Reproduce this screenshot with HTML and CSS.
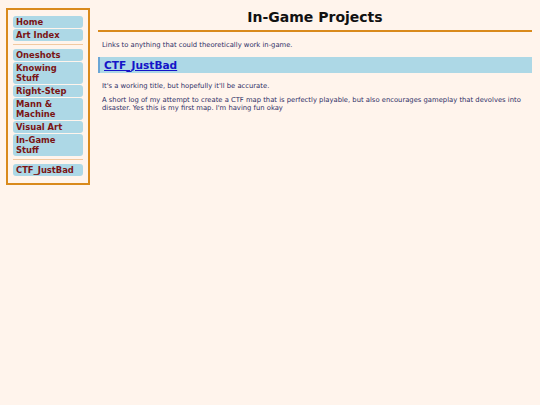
FILE: index.html
```html
<!DOCTYPE html>
<html>
<head>
<meta charset="utf-8">
<title>In-Game Projects</title>
<link rel="stylesheet" href="styles.css">
</head>
<body>
<div class="page">
  <nav class="sidebar">
    <a class="nav-item" href="#">Home</a>
    <a class="nav-item" href="#">Art Index</a>
    <hr class="nav-sep">
    <a class="nav-item" href="#">Oneshots</a>
    <a class="nav-item" href="#">Knowing Stuff</a>
    <a class="nav-item" href="#">Right-Step</a>
    <a class="nav-item" href="#">Mann &amp; Machine</a>
    <a class="nav-item" href="#">Visual Art</a>
    <a class="nav-item" href="#">In-Game Stuff</a>
    <hr class="nav-sep">
    <a class="nav-item" href="#">CTF_JustBad</a>
  </nav>
  <main class="main">
    <h1 class="title">In-Game Projects</h1>
    <p class="intro">Links to anything that could theoretically work in-game.</p>
    <h2 class="entry-head"><a href="#">CTF_JustBad</a></h2>
    <p class="text">It's a working title, but hopefully it'll be accurate.</p>
    <p class="text">A short log of my attempt to create a CTF map that is perfectly playable, but also encourages gameplay that devolves into disaster. Yes this is my first map. I'm having fun okay</p>
  </main>
</div>
</body>
</html>
```

FILE: styles.css
```css
html, body {
  margin: 0;
  padding: 0;
  background: #fff4ec;
}
body {
  font-family: "DejaVu Sans", Verdana, sans-serif;
  color: #2e2e66;
}
.page {
  display: flex;
  align-items: flex-start;
  gap: 8px;
  padding: 8px 8px 0 6px;
}
.sidebar {
  flex: 0 0 auto;
  width: 70px;
  border: 2px solid #d98a1c;
  padding: 6px 5px 7px 5px;
  display: flex;
  flex-direction: column;
  gap: 1px;
}
.nav-item {
  display: block;
  background: #add8e6;
  color: #7a1414;
  font-weight: bold;
  font-size: 8.4px;
  line-height: 10px;
  padding: 1px 4px 1px 3px;
  border-radius: 3px;
  text-decoration: none;
}
.nav-sep {
  border: none;
  border-top: 1px solid #f2c9a0;
  margin: 2px 0 3px 0;
  height: 0;
}
.main {
  flex: 1 1 auto;
}
.title {
  margin: 0;
  text-align: center;
  font-size: 14px;
  line-height: 18px;
  padding-top: 0;
  padding-bottom: 4px;
  color: #111;
  border-bottom: 2px solid #d98a1c;
}
.intro, .text {
  font-size: 6.8px;
  line-height: 8px;
  margin: 9px 4px 0 4px;
}
.entry-head {
  margin: 8px 0 0 0;
  background: #add8e6;
  border-left: 2px solid #6aa6d6;
  font-size: 10.6px;
  line-height: 14px;
  padding: 1px 4px;
}
.entry-head a {
  color: #1515c8;
  text-decoration: underline;
}
.text + .text {
  margin-top: 6px;
}
```
